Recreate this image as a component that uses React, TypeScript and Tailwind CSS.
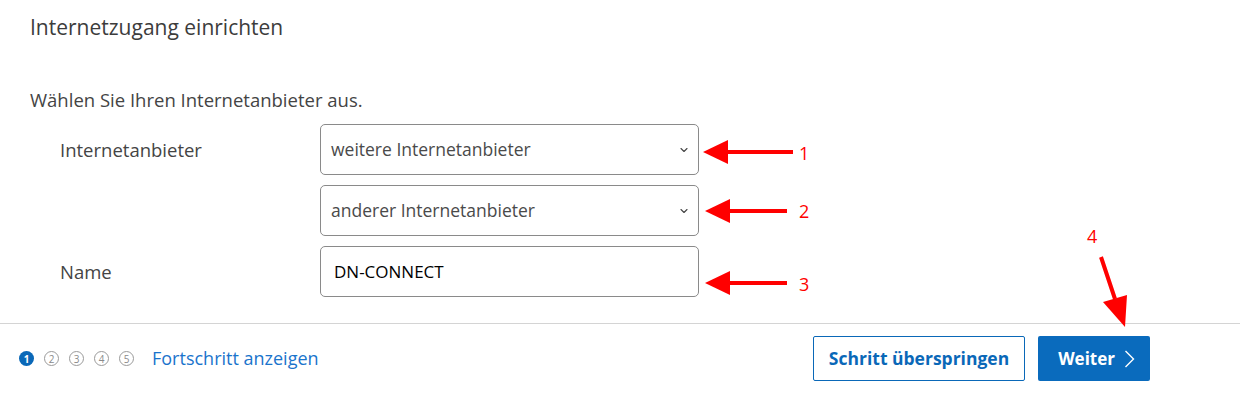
import { ChevronDown } from 'lucide-react'

const font = { fontFamily: '"Open Sans", "Noto Sans", sans-serif' }

function StepDots() {
  return (
    <div className="flex items-center gap-[10px]">
      {[1, 2, 3, 4, 5].map((n) =>
        n === 1 ? (
          <span
            key={n}
            className="flex h-[15px] w-[15px] items-center justify-center rounded-full bg-[#0a68b8] text-[10px] font-bold leading-none text-white"
          >
            {n}
          </span>
        ) : (
          <span
            key={n}
            className="flex h-[15px] w-[15px] items-center justify-center rounded-full border border-[#9a9a9a] text-[10px] leading-none text-[#8a8a8a]"
          >
            {n}
          </span>
        ),
      )}
    </div>
  )
}

function SelectBox({ value }: { value: string }) {
  return (
    <div className="flex h-[51px] w-[379px] items-center justify-between rounded-[5px] border border-[#8a8a8a] pl-[10px] pr-[8px] text-[17.5px] text-[#4a4a4a]">
      <span>{value}</span>
      <ChevronDown size={12} strokeWidth={2.2} className="text-[#444]" />
    </div>
  )
}

// rote Markierungspfeile aus dem Screenshot
function Annotations() {
  return (
    <>
      <svg className="pointer-events-none absolute left-0 top-0" width="1240" height="410">
        <g fill="#ff0000">
          <polygon points="703,152 728,140 728,164" />
          <rect x="726" y="150" width="67" height="4" />
          <polygon points="705,211 730,199 730,223" />
          <rect x="728" y="209" width="59" height="4" />
          <polygon points="705,283 730,271 730,295" />
          <rect x="728" y="281" width="59" height="4" />
          <polygon points="1125,327 1103,302 1127,295" />
          <line x1="1101" y1="257" x2="1115" y2="299" stroke="#ff0000" strokeWidth="4" />
        </g>
      </svg>
      <span className="absolute left-[799px] top-[140px] text-[18px] text-[#ff0000]">1</span>
      <span className="absolute left-[799px] top-[198px] text-[18px] text-[#ff0000]">2</span>
      <span className="absolute left-[799px] top-[271px] text-[18px] text-[#ff0000]">3</span>
      <span className="absolute left-[1087px] top-[223px] text-[18px] text-[#ff0000]">4</span>
    </>
  )
}

function App() {
  return (
    <div className="relative h-[410px] w-[1240px] overflow-hidden bg-white" style={font}>
      <div className="px-[30px]">
        <h1 className="pt-[13px] text-[21px] leading-[28px] text-[#3c3c3c]">Internetzugang einrichten</h1>
        <p className="mt-[47px] text-[18.5px] leading-[24px] text-[#444]">Wählen Sie Ihren Internetanbieter aus.</p>
        <div className="mt-[12px] grid grid-cols-[260px_379px] gap-y-[10px] pl-[30px]">
          <label className="self-center text-[18.5px] text-[#444]">Internetanbieter</label>
          <SelectBox value="weitere Internetanbieter" />
          <span />
          <SelectBox value="anderer Internetanbieter" />
          <label className="self-center text-[18.5px] text-[#444]">Name</label>
          <div className="flex h-[51px] items-center rounded-[5px] border border-[#8a8a8a] pl-[13px] text-[17px] text-black">
            DN-CONNECT
          </div>
        </div>
      </div>
      <div className="mt-[26px] border-t border-[#d4d4d4]" />
      <div className="flex items-center pl-[19px] pt-[12px]">
        <StepDots />
        <a className="ml-[18px] text-[18px] text-[#1a74cc]">Fortschritt anzeigen</a>
        <div className="ml-auto mr-[90px] flex gap-[13px]">
          <button
            type="button"
            className="h-[45px] rounded-[2px] border border-[#0a68b8] px-[15px] text-[17.5px] font-bold text-[#0a68b8]"
          >
            Schritt überspringen
          </button>
          <button
            type="button"
            className="flex h-[45px] items-center gap-[9px] rounded-[2px] bg-[#0a6bbd] pl-[20px] pr-[15px] text-[17px] font-bold text-white"
          >
            Weiter
            <svg width="11" height="18" viewBox="0 0 11 18" fill="none" stroke="currentColor" strokeWidth="1.4">
              <polyline points="1.5,1 9.5,9 1.5,17" />
            </svg>
          </button>
        </div>
      </div>
      <Annotations />
    </div>
  )
}

export default App
